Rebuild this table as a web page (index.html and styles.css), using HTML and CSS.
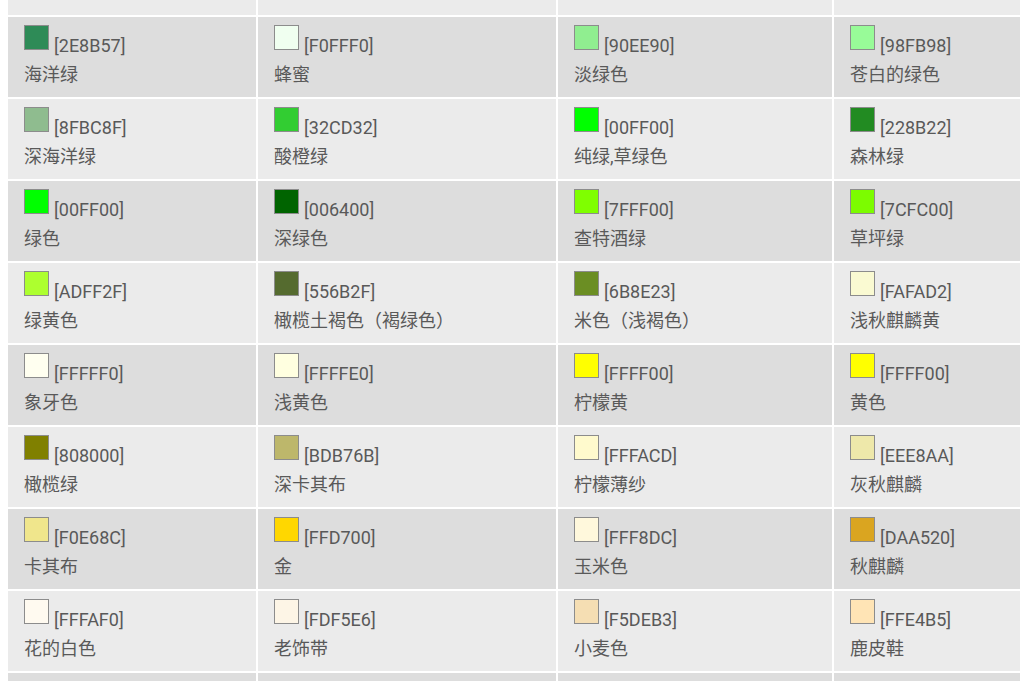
FILE: index.html
```html
<!DOCTYPE html>
<html lang="zh-CN">
<head>
    <meta charset="UTF-8">
    <meta name="viewport" content="width=device-width, initial-scale=1.0">
    <title>颜色对照表</title>
    <link rel="stylesheet" href="styles.css">
</head>
<body>
    <!-- Colour table (page scrolled part-way down) -->
    <table class="colors">
        <colgroup>
            <col class="c1">
            <col class="c2">
            <col class="c3">
            <col class="c4">
        </colgroup>
        <tbody>
            <!-- row above, scrolled out of view -->
            <tr class="light">
                <td></td>
                <td></td>
                <td></td>
                <td></td>
            </tr>
            <tr class="dark">
                <td><span class="sw" style="background:#2E8B57"></span>[2E8B57]<br>海洋绿</td>
                <td><span class="sw" style="background:#F0FFF0"></span>[F0FFF0]<br>蜂蜜</td>
                <td><span class="sw" style="background:#90EE90"></span>[90EE90]<br>淡绿色</td>
                <td><span class="sw" style="background:#98FB98"></span>[98FB98]<br>苍白的绿色</td>
            </tr>
            <tr class="light">
                <td><span class="sw" style="background:#8FBC8F"></span>[8FBC8F]<br>深海洋绿</td>
                <td><span class="sw" style="background:#32CD32"></span>[32CD32]<br>酸橙绿</td>
                <td><span class="sw" style="background:#00FF00"></span>[00FF00]<br>纯绿,草绿色</td>
                <td><span class="sw" style="background:#228B22"></span>[228B22]<br>森林绿</td>
            </tr>
            <tr class="dark">
                <td><span class="sw" style="background:#00FF00"></span>[00FF00]<br>绿色</td>
                <td><span class="sw" style="background:#006400"></span>[006400]<br>深绿色</td>
                <td><span class="sw" style="background:#7FFF00"></span>[7FFF00]<br>查特酒绿</td>
                <td><span class="sw" style="background:#7CFC00"></span>[7CFC00]<br>草坪绿</td>
            </tr>
            <tr class="light">
                <td><span class="sw" style="background:#ADFF2F"></span>[ADFF2F]<br>绿黄色</td>
                <td><span class="sw" style="background:#556B2F"></span>[556B2F]<br>橄榄土褐色（褐绿色）</td>
                <td><span class="sw" style="background:#6B8E23"></span>[6B8E23]<br>米色（浅褐色）</td>
                <td><span class="sw" style="background:#FAFAD2"></span>[FAFAD2]<br>浅秋麒麟黄</td>
            </tr>
            <tr class="dark">
                <td><span class="sw" style="background:#FFFFF0"></span>[FFFFF0]<br>象牙色</td>
                <td><span class="sw" style="background:#FFFFE0"></span>[FFFFE0]<br>浅黄色</td>
                <td><span class="sw" style="background:#FFFF00"></span>[FFFF00]<br>柠檬黄</td>
                <td><span class="sw" style="background:#FFFF00"></span>[FFFF00]<br>黄色</td>
            </tr>
            <tr class="light">
                <td><span class="sw" style="background:#808000"></span>[808000]<br>橄榄绿</td>
                <td><span class="sw" style="background:#BDB76B"></span>[BDB76B]<br>深卡其布</td>
                <td><span class="sw" style="background:#FFFACD"></span>[FFFACD]<br>柠檬薄纱</td>
                <td><span class="sw" style="background:#EEE8AA"></span>[EEE8AA]<br>灰秋麒麟</td>
            </tr>
            <tr class="dark">
                <td><span class="sw" style="background:#F0E68C"></span>[F0E68C]<br>卡其布</td>
                <td><span class="sw" style="background:#FFD700"></span>[FFD700]<br>金</td>
                <td><span class="sw" style="background:#FFF8DC"></span>[FFF8DC]<br>玉米色</td>
                <td><span class="sw" style="background:#DAA520"></span>[DAA520]<br>秋麒麟</td>
            </tr>
            <tr class="light">
                <td><span class="sw" style="background:#FFFAF0"></span>[FFFAF0]<br>花的白色</td>
                <td><span class="sw" style="background:#FDF5E6"></span>[FDF5E6]<br>老饰带</td>
                <td><span class="sw" style="background:#F5DEB3"></span>[F5DEB3]<br>小麦色</td>
                <td><span class="sw" style="background:#FFE4B5"></span>[FFE4B5]<br>鹿皮鞋</td>
            </tr>
            <!-- next row, only its top edge is in view -->
            <tr class="dark">
                <td></td>
                <td></td>
                <td></td>
                <td></td>
            </tr>
        </tbody>
    </table>
</body>
</html>
```

FILE: styles.css
```css
/* Page reset */
html {
    overflow: hidden;
}

body {
    margin: 0;
    padding: 0 0 0 6px;
    background-color: #ffffff;
    font-family: Roboto, "Noto Sans CJK SC", sans-serif;
    font-size: 18px;
    color: #595959;
}

/* Colour table */
.colors {
    width: 1016px;
    margin-top: -67px;
    table-layout: fixed;
    border-collapse: separate;
    border-spacing: 2px;
}

.colors .c1 { width: 248px; }
.colors .c2 { width: 298px; }
.colors .c3 { width: 274px; }
.colors .c4 { width: 186px; }

.colors td {
    box-sizing: border-box;
    height: 80px;
    padding: 8px 16px 0;
    vertical-align: top;
    line-height: 29px;
    white-space: nowrap;
}

.colors tr.dark td {
    background-color: #dddddd;
}

.colors tr.light td {
    background-color: #ebebeb;
}

/* Colour swatch */
.sw {
    display: inline-block;
    width: 23px;
    height: 23px;
    margin: 0 5px 2px 0;
    border: 1px solid #8c8c8c;
}
```
